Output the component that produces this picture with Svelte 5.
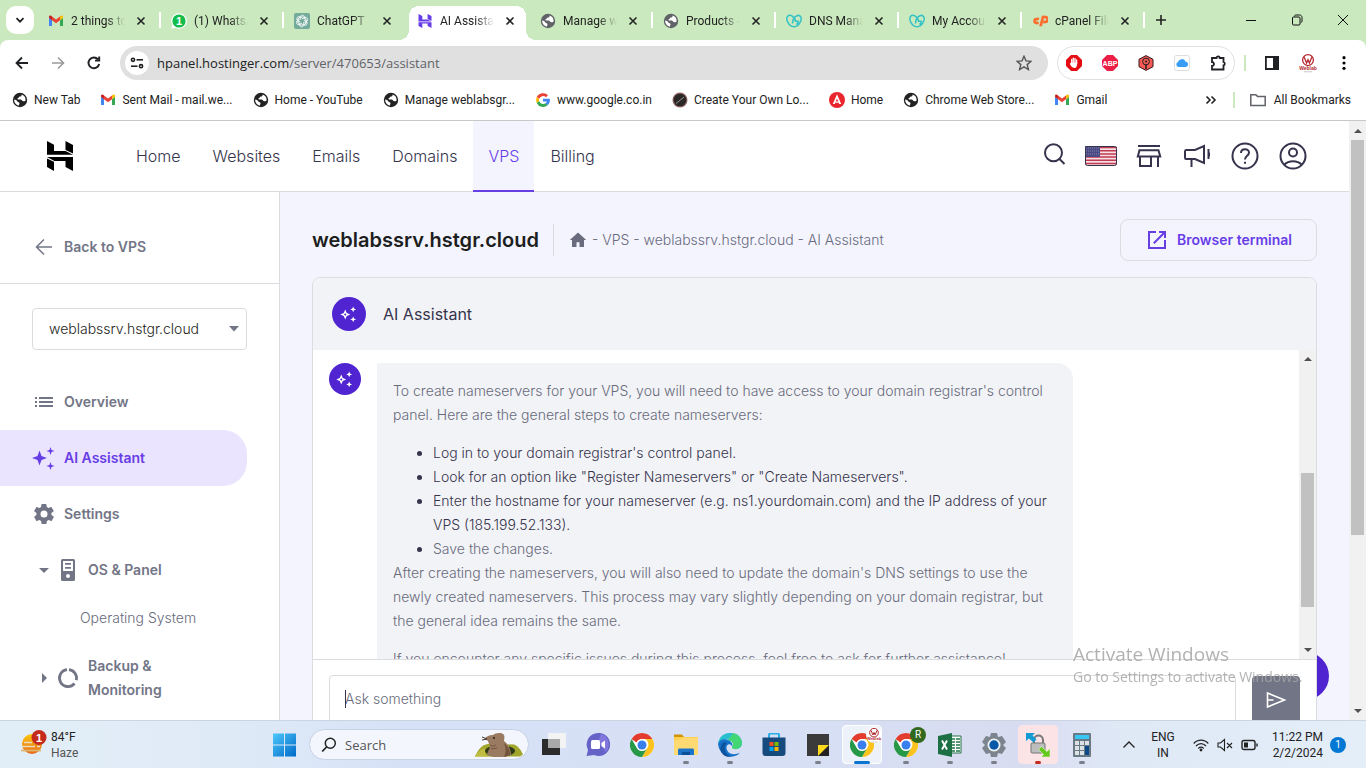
<script>
  const tabs = [
    { icon: 'gmail', title: '2 things to do' },
    { icon: 'whatsapp', title: '(1) WhatsApp' },
    { icon: 'chatgpt', title: 'ChatGPT' },
    { icon: 'hostinger', title: 'AI Assistant', active: true },
    { icon: 'globe', title: 'Manage web' },
    { icon: 'globe', title: 'Products - all' },
    { icon: 'godaddy', title: 'DNS Manage' },
    { icon: 'godaddy', title: 'My Account' },
    { icon: 'cpanel', title: 'cPanel File M' }
  ];

  const bookmarks = [
    { icon: 'globe', label: 'New Tab' },
    { icon: 'gmail', label: 'Sent Mail - mail.we...' },
    { icon: 'globe', label: 'Home - YouTube' },
    { icon: 'globe', label: 'Manage weblabsgr...' },
    { icon: 'google', label: 'www.google.co.in' },
    { icon: 'logo', label: 'Create Your Own Lo...' },
    { icon: 'angular', label: 'Home' },
    { icon: 'globe', label: 'Chrome Web Store...' },
    { icon: 'gmail', label: 'Gmail' }
  ];

  const nav = ['Home', 'Websites', 'Emails', 'Domains', 'VPS', 'Billing'];
  const headerIcons = ['search', 'flag', 'store', 'megaphone', 'help', 'account'];

  const apps = [
    { icon: 'taskview', label: 'Task View' },
    { icon: 'chat', label: 'Chat' },
    { icon: 'chrome', label: 'Chrome' },
    { icon: 'explorer', label: 'File Explorer', state: 'open' },
    { icon: 'edge', label: 'Edge', state: 'open' },
    { icon: 'msstore', label: 'Store' },
    { icon: 'sticky', label: 'Sticky Notes', state: 'open' },
    { icon: 'chromeW', label: 'Chrome, work', state: 'focused' },
    { icon: 'chromeR', label: 'Chrome, R', state: 'open' },
    { icon: 'excel', label: 'Excel', state: 'open' },
    { icon: 'gear', label: 'Settings', state: 'open' },
    { icon: 'winscp', label: 'WinSCP', state: 'alert' },
    { icon: 'calc', label: 'Calculator', state: 'open' }
  ];
</script>

{#snippet favicon(name)}
  <svg class="fav" class:dim={name === 'globe'} viewBox="0 0 16 16" aria-hidden="true">
    {#if name === 'gmail'}
      <path d="M1 3.6V13h3V7.2L1 4.8z" fill="#4285f4" /><path d="M15 3.6V13h-3V7.2l3-2.4z" fill="#34a853" />
      <path d="M4 3.5v3.8l4 3 4-3V3.5L8 6.500z" fill="#ea4335" />
      <path d="M12 3.500v3.700l3-2.200V4c0-1.600-1.700-1.900-2.500-1z" fill="#fbbc04" />
      <path d="M4 3.500v3.700L1 5V4c0-1.600 1.700-1.900 2.500-1z" fill="#c5221f" />
    {:else if name === 'whatsapp'}
      <path d="M8 .3A7.700 7.700 0 0 0 1.300 11.800L.4 15.700l4-1A7.700 7.700 0 1 0 8 .3z" fill="#fff" />
      <circle cx="8" cy="8" r="6.600" fill="#12bd4c" /><text x="8" y="12" text-anchor="middle" class="mark" font-size="11" fill="#fff">1</text>
    {:else if name === 'chatgpt'}
      <rect width="16" height="16" rx="2" fill="#74aa9c" />
      <g fill="none" stroke="#fff" stroke-width="1">
        {#each [0, 60, 120, 180, 240, 300] as turn}
          <path d="M6.200 7V4.400C6.200 1.600 10 1.500 10.600 3.700M6.200 5.200 9 3.600 12 5.300" transform={`rotate(${turn} 8 8)`} stroke-width=".8" />
        {/each}
      </g>
    {:else if name === 'hostinger'}
      <path d="M1.500 1 5.300 3v3.600h5.200l3.800 2H1.500zM10.600 1l3.900 2v5L10.600 6zM1.500 9.300h13V15l-3.900-2v-2.600H5.300V15l-3.800-2z" fill="#673de6" />
      <path d="M4 8.500h9" stroke="#b59cf7" stroke-width="1" />
    {:else if name === 'globe'}
      <circle cx="8" cy="8" r="7.200" fill="currentColor" />
      <path d="M9.600 2.400c.2 1.800-.8 2-1.900 2.200-.7.200-.7 1.200-1.600 1.400-.8.300-1 1.500.1 1.600 1.900.1 3.600-.2 4 1.200.2.700 1.800.6 3.300-.1.600-3-1.300-5.400-3.900-6.300zM2.200 7.600c1.600.3 2.800.9 3.200 1.900.4.900 2.100.5 2.100 1.700 0 .9-.6 1.300-.7 2.500-2.700-.5-4.900-3.100-4.600-6.100z" fill="#fff" />
    {:else if name === 'godaddy'}
      <path d="M8 13.700C3 14-.8 6.200 1.700 3.300 4.200.7 9.500 4 9.700 9M8 13.700C13 14 16.800 6.200 14.300 3.300 11.800.7 6.400 4.500 6.600 10.500M9.300 8.300h2.900c0 1.700-.7 2.600-1.700 3.200" fill="none" stroke="#35c2c7" stroke-width="1.500" />
    {:else if name === 'cpanel'}
      <path d="M7 5H4.500a3 3 0 0 0 0 6H6l.6-2H4.700a1 1 0 0 1 0-2h1.700zM7.600 13l2.600-10h3a3 3 0 0 1 0 7h-2l.5-2h1.300a1.500 1.500 0 0 0 0-3h-1.200L9.700 13z" fill="#ff6c2c" stroke="#ff6c2c" stroke-width=".7" />
    {:else if name === 'google'}
      <path d="M13 3.300A7 7 0 0 0 1.700 5l2.400 1.800A4.200 4.200 0 0 1 11 5.300z" fill="#ea4335" />
      <path d="M1.700 5a7 7 0 0 0 0 6l2.400-1.900a4.200 4.200 0 0 1 0-2.300z" fill="#fbbc05" />
      <path d="M1.700 11a7 7 0 0 0 11 2.200l-2.300-1.900a4.200 4.200 0 0 1-6.300-2.200z" fill="#34a853" />
      <path d="M12.700 13.200A7 7 0 0 0 14.800 6.800H8v2.800h3.900a3.500 3.500 0 0 1-1.500 1.700z" fill="#4285f4" />
    {:else if name === 'logo'}
      <circle cx="8" cy="8" r="7.500" fill="#8d625e" /><circle cx="8" cy="8" r="6.300" fill="#2b2727" />
      <path d="m4 11.500 8-6.500" stroke="#999" stroke-width="1" />
    {:else}
      <circle cx="8" cy="8" r="8" fill="#e9262d" /><path d="M8 2.200 3.800 12h2L8 6.500l2.200 5.500h2zM6.500 9.500h3v1.200h-3z" fill="#fff" />
    {/if}
  </svg>
{/snippet}

{#snippet sparkle()}
  <svg viewBox="0 0 24 24" fill="currentColor" aria-hidden="true">
    <path d="M7.500 4.500 9.500 10 15 12l-5.500 2-2 5.500L5.500 14 0 12l5.500-2zM18.500 1l1 3 3 1-3 1-1 3-1-3-3-1 3-1zM18.500 16l1 3 3 1-3 1-1 3-1-3-3-1 3-1z" />
  </svg>
{/snippet}

{#snippet sparkleOutline()}
  <svg viewBox="0 0 24 24" width="20" height="20" fill="currentColor" aria-hidden="true">
    <path fill-rule="evenodd" d="M7.500 6.500 9.300 10.700 13.500 12.500 9.300 14.300 7.500 18.500 5.700 14.300 1.500 12.500 5.700 10.700zM7.500 11 6 12.500 7.500 14 9 12.500zM17 3l1 2.500L20.500 6.500 18 7.500 17 10l-1-2.500-2.500-1 2.500-1zM17 15l1 2.500 2.500 1-2.500 1-1 2.500-1-2.500-2.500-1 2.500-1z" />
  </svg>
{/snippet}

{#snippet chromeLogo()}
  <circle cx="12" cy="12" r="12" fill="#fff" />
  <path d="M12 0a12 12 0 0 1 10.400 6H12a6 6 0 0 0-5.500 3.500L1.600 6A12 12 0 0 1 12 0z" fill="#e33b2e" />
  <path d="M22.400 6a12 12 0 0 1-10.400 18l5.200-9A6 6 0 0 0 15 6z" fill="#fcc31e" />
  <path d="M1.600 6a12 12 0 0 0 10.400 18l5.200-9a6 6 0 0 1-10.400 0z" fill="#279847" />
  <circle cx="12" cy="12" r="5.800" fill="#fff" /><circle cx="12" cy="12" r="4.500" fill="#3a7ff0" />
{/snippet}

{#snippet weblabLogo()}
  <circle cx="12" cy="8.500" r="6.500" fill="none" stroke="#b3272d" stroke-width="1.500" />
  <path d="m7.500 5 2.800 7L12 8l1.700 4 2.800-7" fill="none" stroke="#b3272d" stroke-width="1.500" />
  <text x="12" y="20" text-anchor="middle" class="mark" font-size="6" fill="#b3272d">Weblab</text>
  <path d="M7 22.500h10" stroke="#aaa" stroke-width=".8" />
{/snippet}

<div class="screen">
  <div class="tabstrip">
    <button class="tabsearch" aria-label="Search tabs"><svg viewBox="0 0 12 12" width="12" height="12"><path d="m2.500 4.200 3.500 3.500 3.500-3.500" fill="none" stroke="#1f1f1f" stroke-width="1.700" /></svg></button>
    <div class="tabs">
      {#each tabs as tab, i}
        <div class="tab" class:active={tab.active} class:nosep={i === 2 || i === 3}>
          {@render favicon(tab.icon)}
          <span class="tabtitle">{tab.title}</span>
          <button class="close" aria-label={`Close ${tab.title}`}><svg viewBox="0 0 10 10" width="10" height="10"><path d="m1.500 1.500 7 7m0-7-7 7" stroke="#242424" stroke-width="1.600" /></svg></button>
        </div>
      {/each}
    </div>
    <button class="newtab" aria-label="New tab"><svg viewBox="0 0 12 12" width="12" height="12"><path d="M6 1v10M1 6h10" stroke="#222" stroke-width="1.600" /></svg></button>
    <div class="wincontrols">
      <button aria-label="Minimize"><svg viewBox="0 0 12 12"><path d="M1 6.500h10" stroke="#111" /></svg></button>
      <button aria-label="Restore"><svg viewBox="0 0 12 12"><path d="M3.500 2.500v-.2C3.500 1.500 4 1 5 1h3.500C10 1 11 2 11 3.500V7c0 1-.5 1.500-1.300 1.500M2.500 3H8c.6 0 1 .4 1 1v6c0 .6-.4 1-1 1H2.500c-.6 0-1-.4-1-1V4c0-.6.4-1 1-1z" fill="none" stroke="#111" /></svg></button>
      <button aria-label="Close window"><svg viewBox="0 0 12 12"><path d="m1 1 10 10M11 1 1 11" stroke="#111" /></svg></button>
    </div>
  </div>

  <div class="toolbar">
    <button aria-label="Back"><svg viewBox="0 0 16 16"><path d="M14 8H3m5-5.500L2.500 8 8 13.500" fill="none" stroke="#202124" stroke-width="1.800" /></svg></button>
    <button aria-label="Forward"><svg viewBox="0 0 16 16"><path d="M2 8h11M8 2.500 13.500 8 8 13.500" fill="none" stroke="#9a9a9a" stroke-width="1.600" /></svg></button>
    <button aria-label="Reload"><svg viewBox="0 0 16 16"><path d="M13.200 9A5.400 5.400 0 1 1 12 4.300M13.200 1.500V5.600H9" fill="none" stroke="#202124" stroke-width="1.900" /></svg></button>
    <div class="omnibox">
      <button class="siteinfo" aria-label="Site information"><svg viewBox="0 0 14 14" width="14" height="14"><g fill="none" stroke="#222" stroke-width="1.600"><circle cx="3" cy="3.800" r="1.600" /><path d="M6.500 3.800H13" /><circle cx="11" cy="10.200" r="1.600" /><path d="M1 10.200h6.500" /></g></svg></button>
      <span class="url">hpanel.hostinger.com<span>/server/470653/assistant</span></span>
      <button class="star" aria-label="Bookmark this tab"><svg viewBox="0 0 16 16"><path d="m8 1.300 2 4.600 5 .4-3.800 3.300 1.200 4.900L8 11.900l-4.400 2.600 1.200-4.900L1 6.300l5-.4z" fill="none" stroke="#555" stroke-width="1.400" /></svg></button>
    </div>
    <div class="extensions">
      <button aria-label="AdBlock"><svg viewBox="0 0 16 16"><path d="M5 0h6l5 5v6l-5 5H5l-5-5V5z" fill="#e40c12" /><path d="M5.700 8.500V4.500m1.600 3V3.200m1.700 4.500V3.500m1.600 5V5" stroke="#fff" stroke-width="1.300" stroke-linecap="round" /><path d="M5 7.500h6.200c0 4-1 5.500-2.800 5.500-2 0-3.900-2-4.600-4.200z" fill="#fff" /></svg></button>
      <button aria-label="Adblock Plus"><svg viewBox="0 0 16 16"><path d="M5 0h6l5 5v6l-5 5H5l-5-5V5z" fill="#ed1e45" /><text x="8" y="10.500" text-anchor="middle" class="mark" font-size="7" fill="#fff">ABP</text></svg></button>
      <button aria-label="Keyword tool"><svg viewBox="0 0 16 16"><path d="m8 .6 7 3.700v7.400l-7 3.700-7-3.700V4.300z" fill="#f75a55" stroke="#33181b" stroke-width="1" /><circle cx="8" cy="6.500" r="3.400" fill="none" stroke="#222" stroke-width="1" /><circle cx="8" cy="6.500" r="1" fill="#222" /><path d="M8 9.500V14" stroke="#222" stroke-width="1.500" /></svg></button>
      <button aria-label="iCloud"><svg viewBox="0 0 16 16"><rect x=".5" y=".5" width="15" height="15" rx="2" fill="#fff" stroke="#ddd" /><path d="M4.500 12a2.600 2.600 0 0 1-.5-5 4 4 0 0 1 7.500-.5A2.800 2.800 0 0 1 12 12z" fill="#3a9df5" /></svg></button>
      <button aria-label="Extensions"><svg viewBox="0 0 16 16"><path d="M2 3h4.500a1.600 1.600 0 0 1 3.200 0H13.500v4a1.700 1.700 0 0 1 0 3.300V14.500H2V11a2 2 0 0 0 0-4z" fill="none" stroke="#202124" stroke-width="1.800" /></svg></button>
    </div>
    <i class="divider"></i>
    <button aria-label="Side panel"><svg viewBox="0 0 16 16"><path d="M1.900 2h12.200v12H1.900z" fill="none" stroke="#202124" stroke-width="1.800" /><path d="M9 2h5v12H9z" fill="#202124" /></svg></button>
    <button aria-label="Profile"><svg class="big" viewBox="0 0 24 24">{@render weblabLogo()}</svg></button>
    <button aria-label="Menu"><svg viewBox="0 0 16 16"><circle cx="8" cy="2.700" r="1.600" /><circle cx="8" cy="8" r="1.600" /><circle cx="8" cy="13.300" r="1.600" /></svg></button>
  </div>

  <div class="bookmarks">
    {#each bookmarks as mark}
      <a href="#bookmark">{@render favicon(mark.icon)}<span>{mark.label}</span></a>
    {/each}
    <button class="more" aria-label="More bookmarks"><svg viewBox="0 0 12 12" width="12" height="12"><path d="m1.500 2.500 3.500 3.500-3.500 3.500m5-7L10 6 6.500 9.500" fill="none" stroke="#222" stroke-width="1.600" /></svg></button>
    <i class="divider"></i>
    <a class="all" href="#all"><svg class="fav" viewBox="0 0 16 16"><path d="M.8 2.700h5l1.700 1.700h7.700v9H.8z" fill="none" stroke="#5f6368" stroke-width="1.500" /></svg><span>All Bookmarks</span></a>
  </div>

  <div class="viewport">
    <div class="page">
      <header>
        <a class="brand" href="#home" aria-label="Hostinger"><svg viewBox="0 0 27 30" width="27" height="30"><path d="M0 0 7 3.800V10h11.500L26 13.800H0zM18.500 0 26 4v8.500L18.500 9zM0 16h26v14l-7.500-4v-6H7.500L0 16zM0 17.500l7 3.300V30l-7-4z" /></svg></a>
        <nav>
          {#each nav as item}<a href="#nav" class:current={item === 'VPS'}>{item}</a>{/each}
        </nav>
        <div class="tools">
          {#each headerIcons as icon}
            <button aria-label={icon}>
              <svg viewBox="0 0 32 32" width="32" height="32" fill="none" stroke="#36344d" stroke-width="2">
                {#if icon === 'search'}<circle cx="16.500" cy="12.800" r="8.500" /><path d="m22 18.500 5.500 5.500" />
                {:else if icon === 'flag'}
                  <rect y="6" width="32" height="20" rx="2" fill="#f5dfe2" stroke="none" />
                  <path d="M0 7.500h32M0 10.700h32M0 13.900h32M0 17.100h32M0 20.300h32M0 23.500h32" stroke="#c23a50" stroke-width="1.500" />
                  <path d="M0 6h15v11H0z" fill="#4b4a82" stroke="none" />
                  <path d="M1 8h14M1 11h14M1 14h14" stroke="#8886b5" stroke-width="1" stroke-dasharray="1 1" />
                  <rect x=".5" y="6.500" width="31" height="19" rx="2" stroke-width="1" />
                {:else if icon === 'store'}<path d="M5 6h22M6.500 10.200h19l1.700 6.300H4.800zM7 17v9h11v-9m7 0v10" />
                {:else if icon === 'megaphone'}<path d="M5 10h9l9-4v17l-9-4H5c-1 0-1-.5-1-1.500v-6C4 10.500 4 10 5 10zm5.500 9v8M27.500 9v10" /><path d="M28 12.500v4" />
                {:else if icon === 'help'}<circle cx="16" cy="16" r="12.500" /><path d="M12 13c0-5 8-5 8-.5 0 3.500-4 3-4 7M16 21.700v2" />
                {:else}<circle cx="16" cy="16" r="12.500" /><circle cx="16" cy="12.500" r="4" /><path d="M7.500 24.500c4-4.500 13-4.500 17 0" />{/if}
              </svg>
            </button>
          {/each}
        </div>
      </header>

      <div class="columns">
        <aside>
          <a class="back" href="#vps"><svg viewBox="0 0 24 24" width="24" height="24"><path d="M20 12H5m7-7.500L4.500 12l7.500 7.500" fill="none" stroke="#727586" stroke-width="1.500" /></svg>Back to VPS</a>
          <div class="picker">
            <select aria-label="Server"><option>weblabssrv.hstgr.cloud</option></select>
            <svg viewBox="0 0 10 6" width="10" height="6"><path d="M0 0h10L5 5.500z" fill="#727586" /></svg>
          </div>
          <a class="item" href="#overview"><svg viewBox="0 0 24 24"><path d="M7 7h14v2H7zm0 4h14v2H7zm0 4h14v2H7zM3 7h2v2H3zm0 4h2v2H3zm0 4h2v2H3z" fill="currentColor" /></svg>Overview</a>
          <a class="item selected" href="#assistant">{@render sparkle()}AI Assistant</a>
          <a class="item" href="#settings"><svg viewBox="0 0 24 24"><path fill="currentColor" d="M19.400 13a7.500 7.500 0 0 0 0-2l2.100-1.600a.5.5 0 0 0 .1-.7l-2-3.400a.5.5 0 0 0-.6-.2l-2.500 1a7.500 7.500 0 0 0-1.700-1L14.400 2.400A.5.5 0 0 0 13.900 2h-4a.5.5 0 0 0-.5.400L9.100 5.100a7.500 7.500 0 0 0-1.700 1l-2.500-1a.5.5 0 0 0-.6.2l-2 3.400a.5.5 0 0 0 .1.700L4.500 11a7.500 7.500 0 0 0 0 2l-2.100 1.600a.5.5 0 0 0-.1.700l2 3.400c.1.200.4.300.6.200l2.500-1a7.500 7.500 0 0 0 1.700 1l.4 2.700c0 .200.200.400.500.400h4c.3 0 .5-.2.500-.4l.4-2.700a7.500 7.500 0 0 0 1.700-1l2.500 1c.2.100.5 0 .6-.2l2-3.400a.5.500 0 0 0-.1-.7zM12 15.500a3.500 3.500 0 1 1 0-7 3.500 3.500 0 0 1 0 7z" /></svg>Settings</a>
          <a class="item group" href="#os"><svg viewBox="0 0 24 24"><path d="M7 10h10l-5 5z" fill="currentColor" /></svg><svg viewBox="0 0 24 24"><path fill="currentColor" fill-rule="evenodd" d="M6.500 1h11A1.500 1.500 0 0 1 19 2.500v19a1.500 1.500 0 0 1-1.500 1.500h-11A1.500 1.500 0 0 1 5 21.500v-19A1.500 1.500 0 0 1 6.500 1zM7 3v10h10V3zm2 2h6v1.700H9zm0 4h6v1.700H9zm3 7a2 2 0 1 0 0 4 2 2 0 0 0 0-4z" /></svg>OS &amp; Panel</a>
          <a class="sub" href="#system">Operating System</a>
          <a class="item group" href="#backup"><svg viewBox="0 0 24 24"><path d="m10 7 5 5-5 5z" fill="currentColor" /></svg><svg viewBox="0 0 24 24"><path d="M13 3.600a8.500 8.500 0 0 1 7.300 10.500M18.500 17.500A8.500 8.500 0 1 1 11 3.600" fill="none" stroke="currentColor" stroke-width="2.800" /></svg><span>Backup &amp; Monitoring</span></a>
        </aside>

        <main>
          <div class="pagehead">
            <h1>weblabssrv.hstgr.cloud</h1>
            <div class="crumbs"><svg viewBox="0 0 18 18" width="18" height="18"><path d="M9 1.500.8 9H3v7h4.500v-4.700h3V16H15V9h2.200z" fill="#6a6b7c" /></svg><span>- VPS - weblabssrv.hstgr.cloud - AI Assistant</span></div>
            <button class="terminal"><svg viewBox="0 0 24 24" width="24" height="24"><path d="M11 4H4v16h16v-8M8.800 15.200 20 4M14 4h6v6" fill="none" stroke="#673de6" stroke-width="2" /></svg>Browser terminal</button>
          </div>
          <section class="card">
            <h2><span class="avatar large">{@render sparkleOutline()}</span>AI Assistant</h2>
            <div class="chat">
              <div class="message">
                <span class="avatar">{@render sparkleOutline()}</span>
                <div class="bubble">
                  <p>To create nameservers for your VPS, you will need to have access to your domain registrar's control panel. Here are the general steps to create nameservers:</p>
                  <ul>
                    <li>Log in to your domain registrar's control panel.</li>
                    <li>Look for an option like "Register Nameservers" or "Create Nameservers".</li>
                    <li>Enter the hostname for your nameserver (e.g. ns1.yourdomain.com) and the IP address of your VPS (185.199.52.133).</li>
                    <li><span>Save the changes.</span></li>
                  </ul>
                  <p>After creating the nameservers, you will also need to update the domain's DNS settings to use the newly created nameservers. This process may vary slightly depending on your domain registrar, but the general idea remains the same.</p>
                  <p>If you encounter any specific issues during this process, feel free to ask for further assistance!</p>
                </div>
              </div>
              <div class="scrollbar inner"><b></b><i></i><b class="down"></b></div>
            </div>
            <form>
              <div class="field"><textarea rows="1" aria-label="Ask something" placeholder="Ask something"></textarea><i></i></div>
              <button type="button" class="send" aria-label="Send"><svg viewBox="0 0 24 24" width="24" height="24"><path d="M3.500 5v14L20.500 12zM3.500 12h6" fill="none" stroke="#fff" stroke-width="1.600" /></svg></button>
            </form>
          </section>
        </main>
      </div>
      <button class="fab" aria-label="Open chat"></button>
    </div>
    <div class="scrollbar outer"><b></b><i></i><b class="down"></b></div>
    <div class="watermark"><strong>Activate Windows</strong><span>Go to Settings to activate Windows.</span></div>
  </div>

  <footer>
    <button class="weather">
      <svg viewBox="0 0 28 30" width="28" height="30"><defs><linearGradient id="sun" x2="0" y2="1"><stop stop-color="#fcc80b" /><stop offset="1" stop-color="#e8681b" /></linearGradient></defs><circle cx="12" cy="14" r="10" fill="url(#sun)" /><path d="M4 12.500h8M14 12.500h7M2 16.500h13M17 16.500h3" stroke="#e9dcc5" stroke-width="1.400" /><path d="M1 20.500h20" stroke="#dfb66d" stroke-width="1.800" /><circle cx="19" cy="7.500" r="7.500" fill="#c42b1c" /><text x="19" y="11.500" text-anchor="middle" class="mark" font-size="11" fill="#fff">1</text></svg>
      <span>84°F<small>Haze</small></span>
    </button>
    <div class="dock">
      <button class="app" aria-label="Start"><svg viewBox="0 0 24 24"><defs><linearGradient id="win" x2="1" y2="1"><stop stop-color="#4cc8fb" /><stop offset="1" stop-color="#0069c8" /></linearGradient></defs><path d="M1 .5h11v11H1zM13 .5h11v11H13zM1 12.500h11v11H1zM13 12.500h11v11H13z" fill="url(#win)" /></svg></button>
      <label class="search">
        <svg viewBox="0 0 16 16" width="16" height="16"><circle cx="9.300" cy="6.300" r="5" fill="none" stroke="#222" stroke-width="1.500" /><path d="m5.500 10-4.300 4.500" stroke="#222" stroke-width="1.800" /></svg>
        <input type="text" placeholder="Search" aria-label="Search" />
        <svg viewBox="0 0 48 24" width="48" height="24"><path d="M0 23.500C5 13 10 10 18 11l21 .5c5 2 7 6 9 10l-3 2z" fill="#a2a62d" /><path d="M0 23.500C4 17 8 15 12 16l-2 5 4 2.500z" fill="#c1bd43" /><ellipse cx="25" cy="18" rx="15" ry="5.500" fill="#2f3a17" /><path d="M12 22c0-3 3-6 3-9 0-2-2-3-2-5l-3-2c1-3 5-4 8-4 2-2 9-3 11 0 1 2 0 4 0 6 4 3 7 8 7 14-6 3-18 3-24 0z" fill="#9a7a60" /><path d="M29 10c4 3 6 7 6 12l-6 2c2-4 2-9 0-14z" fill="#75543d" /><circle cx="19" cy="5" r="1" fill="#2c211c" /><path d="m7 4 5 2m-5 1 5-1" stroke="#40352f" /><path d="M15 12c3 2 4 1 6 0m-5 4 6-1" stroke="#72543f" fill="none" /></svg>
      </label>
      {#each apps as app}
        <button class={`app ${app.state ?? ''}`} aria-label={app.label}>
          <svg viewBox="0 0 24 24">
            {#if app.icon === 'taskview'}<path d="M6 0h18v15H6z" fill="#f3f3f3" /><path d="M0 6h18v16H0z" fill="#2b2b2b" /><path d="M6 6h12v9H6z" fill="#a9a9a9" />
            {:else if app.icon === 'chat'}<path d="M12 0a11.500 11.500 0 1 1-4 22l-7.500 1 1.500-6A11.500 11.500 0 0 1 12 0z" fill="#6563c8" /><path d="M15 1c8 2 10 12 5 18L12 9z" fill="#8278dc" /><rect x="5" y="7" width="9" height="9" rx="1.500" fill="#fff" /><path d="m15.500 10 3.500-2.500v8L15.500 13z" fill="#fff" />
            {:else if app.icon === 'chrome'}{@render chromeLogo()}
            {:else if app.icon === 'explorer'}<path d="M0 1.500h8l2 2.500H0z" fill="#d29407" /><path d="M0 4h24v18H0z" fill="#ffcf50" /><path d="M0 8 10 5h14v17H0z" fill="#ffda72" /><path d="M4 22v-5c0-1 .7-1.500 1.500-1.500h13c.8 0 1.500.5 1.500 1.500v5z" fill="#1b74c8" /><path d="M8 19h8v3H8z" fill="#0b4f98" />
            {:else if app.icon === 'edge'}<path d="M0 11C1 3 7-.3 12.500 0 20 0 24 5 24 10c0 4-3 6-6.500 6-3 0-4-1.500-3-3 2-4-2-7-6-6.500C4 7 1 9 0 11z" fill="#29bfcf" /><path d="M15 0c8 2 10 9 8 13-1.500 2.500-4 3.500-7 3-2-.5-2.500-1.500-1.500-3 2-4-2-6-5-5z" fill="#42d675" /><path d="M0 11c1-4 6-6 10-4 4 1.500 5 5 4 6-3-4-7 0-5 4 2 5 9 5 13 2.500C18 26 2 26 0 11z" fill="#1673c9" /><path d="M9 10c-5 4-1 13 5 13.700C5 25 1 18 3 13c1-3 3-5 6-3z" fill="#10539d" />
            {:else if app.icon === 'msstore'}<path d="M7 5V2c0-1 .5-1.500 1.500-1.500h7c1 0 1.500.5 1.500 1.500v3" fill="none" stroke="#28aee8" stroke-width="2" /><path d="M.5 4.500h23V20c0 2-1 3-3 3h-17c-2 0-3-1-3-3z" fill="#174b7e" /><path d="M7.500 9h4v4h-4z" fill="#f25022" /><path d="M12.500 9h4v4h-4z" fill="#7fba00" /><path d="M7.500 14h4v4h-4z" fill="#00a4ef" /><path d="M12.500 14h4v4h-4z" fill="#ffb900" />
            {:else if app.icon === 'sticky'}<path d="M1 1h22v22H1z" fill="#3a3a3a" /><path d="M12 12h11v11H12z" fill="#222" /><path d="M12 12h11L12 23z" fill="#ffd91c" />
            {:else if app.icon === 'chromeW'}{@render chromeLogo()}
            {:else if app.icon === 'chromeR'}{@render chromeLogo()}
            {:else if app.icon === 'excel'}<path d="M12 3h11v17H12z" fill="#fff" stroke="#217346" /><path d="M14 6h3m1 0h4m-8 3h3m1 0h4m-8 3h3m1 0h4m-8 3h3m1 0h4m-8 3h3m1 0h4" stroke="#217346" stroke-width="1.500" /><path d="m0 3 14-3v24L0 21z" fill="#1d7044" /><path d="m4 7.500 5 9m0-9-5 9" stroke="#fff" stroke-width="1.900" />
            {:else if app.icon === 'gear'}<path d="M9 0h6l1 4 4-1 4 6-3 3 3 3-4 6-4-1-1 4H9l-1-4-4 1-4-6 3-3-3-3 4-6 4 1z" fill="#7c858d" /><circle cx="12" cy="12" r="6.500" fill="#eef2f5" /><circle cx="12" cy="12" r="4.700" fill="#0758a6" />
            {:else if app.icon === 'winscp'}<path d="M8 11V7c0-6 9-6 9 0v4" fill="none" stroke="#777" stroke-width="2" /><rect x="5" y="10" width="14" height="10" rx="1" fill="#bdbdbd" stroke="#777" /><path d="M0 0h9L6.500 2.500l4 4-3 3-4.500-4L0 8z" fill="#159bd4" /><path d="M24 24h-9l2.500-2.500-5-5 3-3 5.500 5 3-3z" fill="#65c91d" stroke="#fff" stroke-width=".5" />
            {:else}<rect x="3" width="18" height="24" rx="1" fill="#697a86" /><path d="M5 2h14v4H5z" fill="#38c6f4" /><path d="M5 8h4v4H5zm5 0h4v4h-4zm5 0h4v4h-4zM5 13h4v4H5zm5 0h4v4h-4zM5 18h4v4H5zm5 0h4v4h-4z" fill="#dce1e4" /><path d="M15 13h4v9h-4z" fill="#0b4a86" />{/if}
          </svg>
          {#if app.icon === 'chromeW'}<svg class="badge" viewBox="0 0 24 24"><circle cx="12" cy="12" r="12" fill="#fff" />{@render weblabLogo()}</svg>{/if}
          {#if app.icon === 'chromeR'}<span class="badge r">R</span>{/if}
        </button>
      {/each}
    </div>
    <div class="tray">
      <button aria-label="Hidden icons"><svg viewBox="0 0 14 14" width="14" height="14"><path d="m1.500 9.500 5.500-5.500 5.500 5.500" fill="none" stroke="#222" stroke-width="1.300" /></svg></button>
      <button class="lang">ENG<br />IN</button>
      <button class="status" aria-label="Network, volume, battery">
        <svg viewBox="0 0 16 16" width="16" height="16" fill="none" stroke="#222" stroke-width="1.200"><path d="M.7 6.500c4-4.500 10.600-4.500 14.600 0M3 9c3-3.200 7-3.200 10 0M5.300 11.500c1.800-1.700 3.600-1.700 5.400 0" /><circle cx="8" cy="13" r=".8" fill="#222" /></svg>
        <svg viewBox="0 0 16 16" width="16" height="16" fill="none" stroke="#222" stroke-width="1.100"><path d="M1 6h2.500L7.500 2.500v11L3.500 10H1zM10 6l5 5m0-5-5 5" /></svg>
        <svg viewBox="0 0 17 16" width="17" height="16" fill="none" stroke="#222" stroke-width="1.400"><rect x="1" y="3.500" width="13" height="9" rx="2" /><path d="M16 6.500v3" /><path d="M3 5.500h4v5H3z" fill="#222" stroke="none" /></svg>
      </button>
      <button class="clock">11:22 PM<br />2/2/2024</button>
      <span class="count">1</span>
    </div>
  </footer>
</div>

<style>
  :global(body) { margin: 0; overflow: hidden; }
  .screen, .screen * { box-sizing: border-box; }
  .screen { height: 100vh; display: flex; flex-direction: column; background: #cae9be; font: 12px/16px Roboto, "Open Sans", sans-serif; color: #222; }
  button { font: inherit; color: inherit; border: 0; background: none; padding: 0; display: flex; align-items: center; justify-content: center; flex: none; }
  a { color: inherit; text-decoration: none; }
  svg { flex: none; display: block; }
  .mark { font-family: "Liberation Sans", sans-serif; font-weight: bold; }
  .fav { width: 16px; height: 16px; }
  .divider { width: 2px; height: 16px; background: #cae9be; flex: none; }

  .tabstrip { display: flex; align-items: center; height: 40px; flex: none; padding-left: 6px; }
  .tabsearch { width: 28px; height: 28px; border-radius: 10px; background: #fff; margin-right: 3px; }
  .tabs { display: flex; align-self: stretch; min-width: 0; }
  .tab { position: relative; width: 123px; display: flex; align-items: center; padding: 1px 11px 0 11px; gap: 7px; }
  .tab::after { content: ""; position: absolute; right: -1px; top: 12px; height: 16px; width: 2px; background: #fff; }
  .tab.nosep::after { display: none; }
  .tab .dim { color: #5f6368; }
  .tabtitle { flex: 1; overflow: hidden; white-space: nowrap; mask-image: linear-gradient(90deg, #000 65%, transparent 98%); }
  .close { width: 16px; height: 16px; }
  .tab.active { isolation: isolate; }
  .tab.active::before { content: ""; position: absolute; z-index: -1; inset: 6px -7px 0 -7px; background:
    radial-gradient(circle at 0 0, transparent 10px, #fff 10px) 0 100% / 10px 10px no-repeat,
    radial-gradient(circle at 100% 0, transparent 10px, #fff 10px) 100% 100% / 10px 10px no-repeat,
    radial-gradient(circle at 100% 100%, #fff 10px, transparent 10px) 10px 0 / 10px 10px no-repeat,
    radial-gradient(circle at 0 100%, #fff 10px, transparent 10px) calc(100% - 10px) 0 / 10px 10px no-repeat,
    linear-gradient(#fff, #fff) 50% 0 / calc(100% - 40px) 100% no-repeat,
    linear-gradient(#fff, #fff) 50% 100% / calc(100% - 20px) calc(100% - 10px) no-repeat; }
  .newtab { width: 34px; height: 32px; }
  .wincontrols { display: flex; margin-left: auto; }
  .wincontrols button { width: 46px; height: 40px; }
  .wincontrols svg { width: 12px; height: 12px; }

  .toolbar { display: flex; align-items: center; height: 46px; flex: none; background: #fff; border-radius: 8px 8px 0 0; padding: 0 4px; }
  .toolbar button { width: 36px; height: 32px; }
  .toolbar svg { width: 16px; height: 16px; }
  .toolbar .big { width: 20px; height: 20px; }
  .omnibox { flex: 1; height: 34px; margin: 0 9px 0 8px; border-radius: 17px; background: #e0e0e0; display: flex; align-items: center; padding: 0 6px 0 5px; }
  .omnibox .siteinfo { width: 24px; height: 24px; border-radius: 50%; background: #fff; margin-right: 8px; }
  .omnibox .siteinfo svg { width: 14px; height: 14px; }
  .url { flex: 1; font: 13px/20px "Open Sans", sans-serif; }
  .url span { color: #5f6368; }
  .extensions { display: flex; height: 34px; align-items: center; border: 1px solid #e0e0e0; border-radius: 17px; margin-right: 9px; padding: 0 1px; width: 178px; justify-content: center; }
  .extensions button { width: 36px; }
  .extensions + .divider { margin-right: 8px; }

  .bookmarks { display: flex; align-items: center; height: 35px; flex: none; background: #fff; border-bottom: 1px solid #c8c8c8; padding: 0 15px 6px 12px; gap: 20px; }
  .bookmarks a { display: flex; gap: 6px; align-items: center; white-space: nowrap; }
  .bookmarks .more { margin-left: auto; }
  .bookmarks .divider { margin-right: -5px; margin-left: -4px; }
  .bookmarks .all { gap: 8px; }

  .viewport { position: relative; flex: 1; min-height: 0; display: flex; background: #fff; }
  .page { position: relative; flex: 1; min-width: 0; display: flex; flex-direction: column; overflow: hidden; font: 300 14px/24px Inter, sans-serif; color: #686b7c; }
  header { display: flex; height: 71px; flex: none; border-bottom: 1px solid #dadce0; padding-right: 32px; }
  .brand { width: 120px; display: flex; align-items: center; padding-left: 47px; }
  nav { display: flex; font-size: 16px; color: #36344d; }
  nav a { display: flex; align-items: center; padding: 0 16px 2px; height: 71px; }
  nav .current { background: #f4f4ff; color: #673de6; border-bottom: 2px solid #673de6; padding: 0 15px; }
  .tools { display: flex; align-items: center; margin-left: auto; }
  .tools button { width: 48px; height: 48px; }

  .columns { flex: 1; min-height: 0; display: flex; }
  aside { width: 280px; flex: none; border-right: 1px solid #dadce0; overflow: hidden; font-weight: 600; color: #727586; }
  .back { display: flex; gap: 8px; padding: 43px 32px 24px; border-bottom: 1px solid #dadce0; }
  .picker { position: relative; margin: 24px 32px; }
  .picker select { display: block; appearance: none; width: 100%; height: 42px; border: 1px solid #dadce0; border-radius: 4px; background: #fff; padding: 0 16px; font: 300 14px/24px Inter, sans-serif; color: #1d1e20; }
  .picker svg { position: absolute; right: 8px; top: 18px; }
  .item { display: flex; align-items: center; gap: 8px; padding: 16px 32px; margin-right: 32px; min-height: 56px; }
  .item svg { width: 24px; height: 24px; }
  .item.selected { background: #ebe4ff; color: #673de6; border-radius: 0 24px 24px 0; }
  .item.group svg:first-child { margin-right: -8px; }
  .sub { display: block; padding: 8px 32px 8px 80px; font-weight: 300; color: #686b7c; }

  main { flex: 1; min-width: 0; background: #f4f4ff; padding: 27px 32px 0; }
  .pagehead { display: flex; align-items: center; height: 42px; margin-bottom: 16px; }
  h1 { margin: 0; font-size: 20px; line-height: 32px; font-weight: 600; color: #1d1e20; border-right: 1px solid #dadce0; padding-right: 14px; margin-right: 15px; }
  .crumbs { display: flex; align-items: center; gap: 5px; white-space: nowrap; }
  .terminal { margin-left: auto; height: 42px; padding: 0 24px; gap: 8px; border: 1px solid #dadce0; border-radius: 8px; font-weight: 600; color: #673de6; }
  .card { position: relative; z-index: 2; background: #fff; border: 1px solid #dadce0; border-radius: 8px; overflow: hidden; }
  h2 { display: flex; align-items: center; gap: 17px; height: 72px; margin: 0; padding: 0 19px; background: #f2f3f6; font-size: 16px; font-weight: 400; color: #36344d; }
  .avatar { width: 32px; height: 32px; border-radius: 50%; background: #5025d1; color: #fff; display: grid; place-items: center; flex: none; }
  .avatar.large { width: 34px; height: 34px; }
  .chat { display: flex; height: calc(100vh - 459px); overflow: hidden; }
  .message { flex: 1; display: flex; align-items: flex-start; gap: 16px; padding: 13px 16px; min-width: 0; }
  .bubble { max-width: 696px; background: #f2f3f6; border-radius: 0 16px 16px 16px; padding: 16px; }
  .bubble p { margin: 0 0 14px; }
  .bubble ul { margin: 0; padding-left: 40px; color: #36344d; }
  .bubble li span { color: #686b7c; }
  form { display: flex; align-items: center; gap: 16px; padding: 15px 16px; border-top: 1px solid #dadce0; }
  .field { position: relative; flex: 1; }
  .field textarea { display: block; width: 100%; height: 50px; border: 1px solid #dadce0; border-radius: 4px; padding: 11px 15px; resize: none; font: 300 14px/24px Inter, sans-serif; outline: 0; }
  .field textarea::placeholder { color: #686b7c; opacity: 1; }
  .field i { position: absolute; left: 16px; top: 15px; width: 1px; height: 18px; background: #36344d; }
  .send { width: 48px; height: 48px; border-radius: 4px; background: #727586; }
  .fab { position: absolute; z-index: 1; right: 20px; bottom: 20px; width: 48px; height: 48px; border-radius: 50%; background: #5025d1; }

  .scrollbar { width: 17px; flex: none; background: #f1f1f1; display: grid; justify-items: center; align-items: center; }
  .scrollbar i { width: 13px; align-self: stretch; background: #c1c1c1; }
  .scrollbar b { border: 4px solid transparent; border-top-width: 0; border-bottom-color: #505050; }
  .scrollbar b.down { border-width: 4px 4px 0; border-color: #505050 transparent transparent; align-self: end; margin-bottom: 7px; }
  .outer { grid-template-rows: 19px 395px 1fr; }
  .inner { grid-template-rows: 123px 134px 1fr; }
  .inner b:first-child { align-self: start; margin-top: 7px; }
  .watermark { position: absolute; z-index: 3; left: calc(100% - 293px); bottom: 33px; font-family: "Open Sans", sans-serif; color: #a5a5a5; opacity: .85; white-space: nowrap; }
  .watermark strong { display: block; font-size: 19px; line-height: 26px; font-weight: 400; }
  .watermark span { display: block; font-size: 14px; line-height: 20px; }

  footer { height: 48px; flex: none; display: grid; grid-template-columns: 1fr auto 1fr; align-items: center; border-top: 1px solid #cbd5e2; background: linear-gradient(90deg, #e2eef7, #dfeaf7 17%, #d6e1f7 30%, #d7dff4 60%, #d8dcf0 75%, #dfe9f6 82%, #e3eef9); }
  .weather { justify-self: start; margin-left: 20px; gap: 3px; text-align: left; }
  .weather small { display: block; font-size: 12px; color: #555; }
  .dock { display: flex; align-items: center; }
  .app { position: relative; width: 44px; height: 47px; isolation: isolate; }
  .app svg { width: 24px; height: 24px; }
  .search { display: flex; align-items: center; width: 220px; height: 31px; margin: 0 3px; padding: 0 5px 0 11px; border-radius: 16px; background: #f3f7fd; border: 1px solid #c7d2e6; }
  .search input { flex: 1; min-width: 0; border: 0; background: none; padding: 0 8px; font: 13px/20px "Open Sans", sans-serif; outline: 0; }
  .search input::placeholder { color: #555; opacity: 1; }
  .open::after, .focused::after, .alert::after { content: ""; position: absolute; bottom: 4px; left: 19px; width: 6px; height: 3px; border-radius: 2px; background: #7b7f89; }
  .focused::after { left: 14px; width: 16px; background: #0a74d1; }
  .alert::after { background: #c42b1c; }
  .focused::before, .alert::before { content: ""; position: absolute; z-index: -1; inset: 4px 2px; border-radius: 4px; background: #edf1fa; border: 1px solid #fff; }
  .alert::before { background: #fce4e6; border-color: #fce4e6; }
  .app .badge { position: absolute; right: 2px; top: 6px; width: 16px; height: 16px; }
  .badge.r { border-radius: 50%; background: #33691e; color: #fff; font-size: 10px; line-height: 16px; }
  .tray { justify-self: end; display: flex; align-items: center; padding-right: 20px; }
  .lang { margin-left: 14px; width: 26px; text-align: center; }
  .status { gap: 8px; margin-left: 17px; }
  .clock { margin-left: 13px; text-align: right; width: 52px; white-space: nowrap; justify-content: flex-end; }
  .count { width: 16px; height: 16px; border-radius: 50%; background: #0078d4; color: #fff; text-align: center; font-size: 10px; line-height: 16px; margin-left: 7px; }
</style>
